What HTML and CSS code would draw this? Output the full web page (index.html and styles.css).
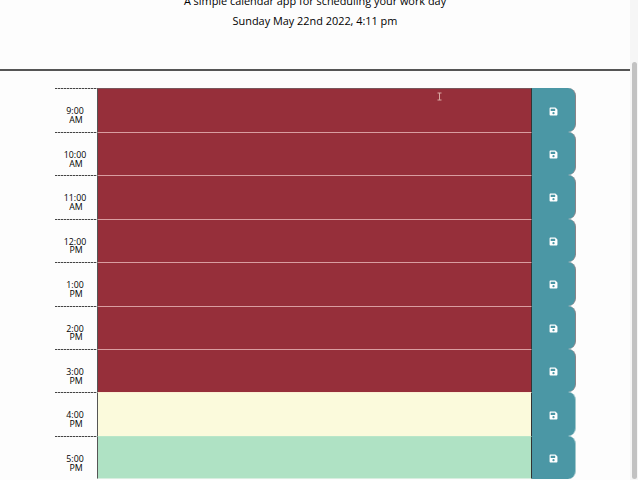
FILE: index.html
```
<!DOCTYPE html>
<html lang="en">
<head>
<meta charset="utf-8">
<title>Work Day Scheduler</title>
<link rel="stylesheet" href="styles.css">
</head>
<body>
<div class="page">
<header class="header">
<p class="lead">A simple calendar app for scheduling your work day</p>
<p class="date">Sunday May 22nd 2022, 4:11 pm</p>
</header>
<main class="schedule" id="schedule"></main>
</div>
<div class="scroll-track"><div class="scroll-thumb"></div></div>
<svg class="cursor" viewBox="0 0 5 9"><path d="M.5 1h4M2.5 1v7M.5 8h4"/></svg>
<script src="script.js"></script>
</body>
</html>
```
FILE: styles.css
```
* { box-sizing: border-box; }
body {
  margin: 0;
  height: 480px;
  display: flex;
  overflow: hidden;
  background: #fdfdfd;
  color: #000;
  font-family: "Open Sans", sans-serif;
}
.page { width: 630px; height: 480px; overflow: hidden; }
.header {
  display: flow-root;
  height: 71px;
  border-bottom: 2px solid #555;
  text-align: center;
  font-size: 10.9px;
  line-height: 16px;
}
.header p { margin: 0; white-space: nowrap; }
.header .lead { margin-top: -7px; }
.date { padding-top: 4px; }
.schedule { width: 521px; margin: 17.4px 0 0 55px; }
.row {
  display: grid;
  grid-template-columns: 42px 435px 44px;
  height: 43.45px;
}
.hour {
  padding: 19px 2px 0 0;
  background: repeating-linear-gradient(90deg, #444 0 2px, #bbb 2px 3px) top / 100% 1px no-repeat;
  font-size: 8.8px;
  line-height: 8.7px;
  text-align: center;
}
.hour span { display: block; }
.hour .half { padding-left: 2px; }
.slot {
  border-top: 1px solid #d99da0;
  border-left: 1px solid #555;
  border-right: 1px solid #333;
}
.row:first-child .slot { border-top-color: #79555a; }
.past { background: #962f3a; }
.present { background: #fbfadc; border-top-color: #fbefd4; }
.future { background: #afe2c4; border-top-color: #b9e6c8; }
.row:last-child .slot { border-bottom: 1px solid #d8eee0; }
.save {
  display: flex;
  align-items: center;
  justify-content: center;
  padding: 2px 0 0;
  border: 0;
  border-right: 1px solid #8a8488;
  border-radius: 0 8px 8px 0;
  background: #4b97a5;
}
.row:nth-child(n+8) .save { border-right-color: #a4c8cc; }
.save svg { width: 9px; height: 9px; }
.scroll-track { width: 8px; height: 480px; padding: 62px 1px 1px 2px; background: #f6f6f6; }
.scroll-thumb { width: 5px; height: 417px; border-radius: 3px; background: #c2c2c2; }
.cursor { position: absolute; left: 437px; top: 92px; width: 5px; height: 9px; fill: none; stroke: #d9a9a2; }
```
FILE: script.js
```
const hours = [
  ["9:00", "AM", "past"], ["10:00", "AM", "past"], ["11:00", "AM", "past"],
  ["12:00", "PM", "past"], ["1:00", "PM", "past"], ["2:00", "PM", "past"],
  ["3:00", "PM", "past"], ["4:00", "PM", "present"], ["5:00", "PM", "future"]
];
document.getElementById("schedule").innerHTML = hours.map(([time, half, state]) => `
<section class="row">
<div class="hour"><span>${time}</span><span class="half">${half}</span></div>
<div class="slot ${state}"></div>
<button class="save" aria-label="Save"><svg viewBox="0 0 448 512"><path fill="#fff" fill-rule="evenodd" d="M434 130 350 46a48 48 0 0 0-34-14H48A48 48 0 0 0 0 80v352a48 48 0 0 0 48 48h352a48 48 0 0 0 48-48V164a48 48 0 0 0-14-34ZM224 416a64 64 0 1 1 0-128 64 64 0 0 1 0 128Zm96-304v100a12 12 0 0 1-12 12H76a12 12 0 0 1-12-12V108a12 12 0 0 1 12-12h229a12 12 0 0 1 15 16Z"/></svg></button>
</section>`).join("");
```
